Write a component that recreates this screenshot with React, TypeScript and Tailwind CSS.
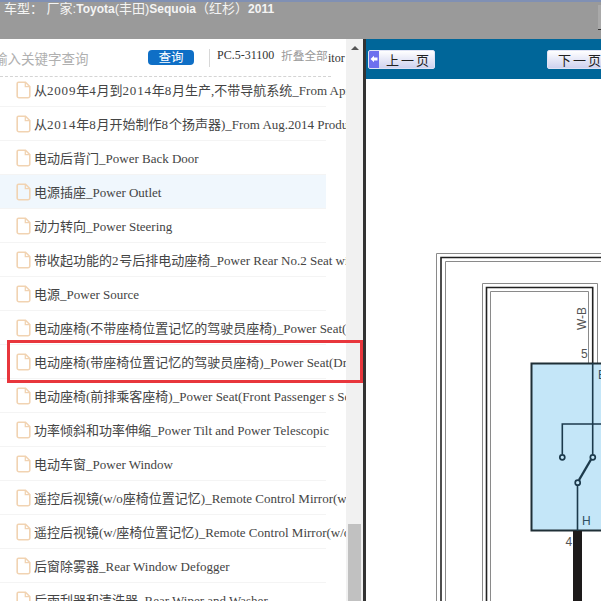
const serif = "font-['Liberation_Serif','Noto_Sans_CJK_SC',serif]";

const rows = [
  "从2009年4月到2014年8月生产,不带导航系统_From Apr.2009 to Aug.2014",
  "从2014年8月开始制作8个扬声器)_From Aug.2014 Production",
  "电动后背门_Power Back Door",
  "电源插座_Power Outlet",
  "动力转向_Power Steering",
  "带收起功能的2号后排电动座椅_Power Rear No.2 Seat with Stowing",
  "电源_Power Source",
  "电动座椅(不带座椅位置记忆的驾驶员座椅)_Power Seat(Driver",
  "电动座椅(带座椅位置记忆的驾驶员座椅)_Power Seat(Driver",
  "电动座椅(前排乘客座椅)_Power Seat(Front Passenger s Seat)",
  "功率倾斜和功率伸缩_Power Tilt and Power Telescopic",
  "电动车窗_Power Window",
  "遥控后视镜(w/o座椅位置记忆)_Remote Control Mirror(w/o",
  "遥控后视镜(w/座椅位置记忆)_Remote Control Mirror(w/o",
  "后窗除雾器_Rear Window Defogger",
  "后雨刮器和清洗器_Rear Wiper and Washer",
];

// digits in the chinese part of a title sit a bit wider than the latin ones
function RowText({ text }: { text: string }) {
  const cut = text.indexOf("_");
  const head = text.slice(0, cut).split(/(\d+)/);
  return (
    <span>
      {head.map((part, i) =>
        /^\d+$/.test(part) ? (
          <span key={i} className="tracking-[0.8px]">{part}</span>
        ) : (
          <span key={i}>{part}</span>
        ),
      )}
      {text.slice(cut)}
    </span>
  );
}

function FileIcon() {
  return (
    <svg width="15" height="18" viewBox="0 0 15 18" fill="none" className="shrink-0">
      <path d="M2.5 1.2H9.5L13.8 5.5V15a1.8 1.8 0 0 1-1.8 1.8H3A1.8 1.8 0 0 1 1.2 15V2.5A1.3 1.3 0 0 1 2.5 1.2Z" stroke="#f1d3b2" strokeWidth="1.6" />
      <path d="M9.3 1.5V5.7H13.6" stroke="#f1d3b2" strokeWidth="1.3" />
    </svg>
  );
}

function PageButton({ label, arrow }: { label: string; arrow?: boolean }) {
  return (
    <div className="flex h-[19px] w-[67px] shrink-0 items-center overflow-hidden rounded-[2px] border border-[#dfe3f5] bg-gradient-to-b from-white to-[#cfd2ef]">
      {arrow && (
        <div className="flex h-full w-[10px] items-center justify-center bg-[#6d70ee]">
          <svg width="8" height="8" viewBox="0 0 8 8" fill="#fff">
            <path d="M0.5 4L4 0.8V2.6H7.5V5.4H4V7.2Z" />
          </svg>
        </div>
      )}
      <span className={`whitespace-nowrap font-['Noto_Sans_CJK_SC',sans-serif] text-[13px] leading-none tracking-[2px] text-[#222] ${arrow ? "ml-[7px]" : "ml-[10px]"}`}>{label}</span>
    </div>
  );
}

function Diagram() {
  return (
    <svg viewBox="0 0 235 522" className="block h-[522px] w-[235px]" fill="none">
      <g transform="translate(-366 -79)">
        <path d="M436.5 601V253.5H601M445.5 601V261.5H601" stroke="#8a8a8a" />
        <path d="M441 601V257.5H601" stroke="#222" strokeWidth="1.6" />
        <path d="M482.5 601V283.5H597.5V363M490.5 601V291.5H588.5V363" stroke="#8a8a8a" />
        <path d="M486.5 601V287.5H592.7V363" stroke="#222" strokeWidth="1.6" />
        <rect x="531.5" y="363.5" width="80" height="167" fill="#c4e6f8" stroke="#1f2f36" strokeWidth="2" />
        <path d="M592.7 363V454.5M562.3 454V424H601" stroke="#1c3a4c" strokeWidth="1.6" />
        <path d="M577.5 485V531" stroke="#1c3a4c" strokeWidth="1.6" />
        <path d="M579 480L591 459.5" stroke="#1c3a4c" strokeWidth="2.4" />
        <circle cx="562.3" cy="457.3" r="2.5" fill="#c4e6f8" stroke="#1c3a4c" strokeWidth="1.7" />
        <circle cx="592.8" cy="457.3" r="2.5" fill="#c4e6f8" stroke="#1c3a4c" strokeWidth="1.7" />
        <circle cx="577.7" cy="482.7" r="2.5" fill="#c4e6f8" stroke="#1c3a4c" strokeWidth="1.7" />
        <rect x="573" y="531" width="9" height="70" fill="#1d1a1a" />
        <g fontFamily="'Liberation Sans',sans-serif" fontSize="12" fill="#555">
          <text transform="translate(586 330) rotate(-90)">W-B</text>
          <text x="581" y="358">5</text>
          <text x="565.5" y="546">4</text>
          <text x="582" y="525" fill="#2f4f60">H</text>
          <text x="598" y="379" fill="#2f4f60">E</text>
        </g>
      </g>
    </svg>
  );
}

export default function App() {
  return (
    <div className="flex h-[601px] w-[601px] flex-col overflow-hidden bg-white">
      <div className="h-[39px] shrink-0 border-t-2 border-[#8090b4] bg-[#9a9a9a]">
        <p className="-mt-[1px] ml-[4px] whitespace-nowrap font-['Liberation_Sans','Noto_Sans_CJK_SC',sans-serif] text-[12px] font-bold leading-[16px] text-[#f4f4f4]">
          <span className="text-[13px] font-normal">车型： 厂家:</span>Toyota<span className="text-[13px] font-normal">(丰田)</span>Sequoia<span className="text-[13px] font-normal">（红杉）</span>2011
        </p>
      </div>
      <div className="flex min-h-0 flex-1">
        <div className="h-full w-[346px] shrink-0 overflow-hidden">
          <div className="flex h-[38px] w-[331px] items-center overflow-visible whitespace-nowrap border-b border-dashed border-[#d4d4d4]">
            <span className="-ml-[6px] mt-[1px] w-[154px] shrink-0 font-['Noto_Sans_CJK_SC',sans-serif] text-[13.5px] text-[#b0b0b0]">输入关键字查询</span>
            <span className="flex h-[15px] w-[46px] shrink-0 items-center justify-center rounded-[4px] bg-[#0f6fc6] font-['Noto_Sans_CJK_SC',sans-serif] text-[12.5px] leading-none text-white">查询</span>
            <span className="ml-[15px] h-[18px] w-px shrink-0 bg-[#d8d8d8]" />
            <span className={`ml-[7px] -mt-[5px] w-[64px] shrink-0 text-[12px] text-[#333] ${serif}`}>PC.5-31100</span>
            <span className="-mt-[5px] w-[47px] shrink-0 font-['Noto_Sans_CJK_SC',sans-serif] text-[11.7px] text-[#999]">折叠全部</span>
            <span className={`text-[12px] text-[#333] ${serif}`}>itor</span>
          </div>
          <ul className="-mt-1">
            {rows.map((row, i) => (
              <li
                key={i}
                className={`flex h-[34px] w-[326px] items-center gap-[3px] overflow-visible whitespace-nowrap border-b border-[#f4f4f4] pl-[16px] text-[13px] text-[#444] ${serif} ${i === 3 ? "bg-[#f0f7fd]" : ""}`}
              >
                <FileIcon />
                <span className="mt-[2px]">
                  <RowText text={row} />
                </span>
              </li>
            ))}
          </ul>
        </div>
        <div className="flex h-full w-[17px] shrink-0 flex-col items-center bg-[#f1f1f1]">
          <div className="mt-[7px] h-0 w-0 border-x-[4px] border-b-[4px] border-x-transparent border-b-[#555]" />
          <div className="mt-[474px] h-[77px] w-[13px] bg-[#c1c1c1]" />
        </div>
        <div className="w-[3px] shrink-0 bg-[#333]" />
        <div className="min-w-0 flex-1">
          <div className="flex h-[40px] items-center justify-between bg-[#006699] pl-[2px] pr-0">
            <PageButton label="上一页" arrow />
            <div className="-mr-[13px]">
              <PageButton label="下一页" />
            </div>
          </div>
          <Diagram />
        </div>
      </div>
      <div className="pointer-events-none absolute left-[7px] top-[340px] h-[43px] w-[356px] border-[3px] border-[#e8363c]" />
      <div className="pointer-events-none absolute right-0 top-[5px] h-[25px] w-[3px] border-b border-[#333] bg-[#a9a9a9]" />
    </div>
  );
}
